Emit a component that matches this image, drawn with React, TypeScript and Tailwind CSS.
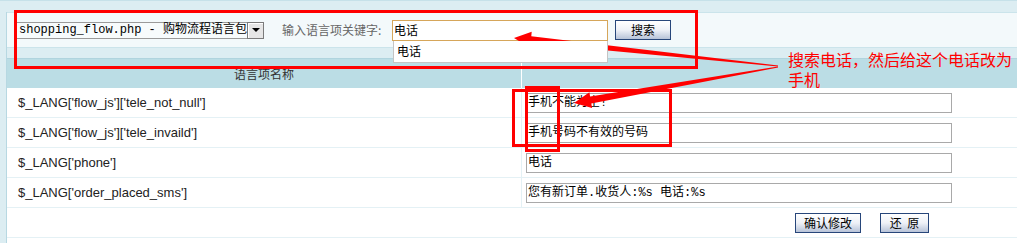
import React from "react";

function arrowPoints(tx: number, ty: number, hx: number, hy: number, hl: number, hw: number, sw0: number, sw1: number) {
  const dx = hx - tx;
  const dy = hy - ty;
  const len = Math.hypot(dx, dy);
  const ux = dx / len;
  const uy = dy / len;
  const nx = -uy;
  const ny = ux;
  const bx = hx - ux * hl;
  const by = hy - uy * hl;
  const p = (x: number, y: number) => `${x.toFixed(1)},${y.toFixed(1)}`;
  return [
    p(tx + nx * sw0, ty + ny * sw0),
    p(bx + nx * sw1, by + ny * sw1),
    p(bx + nx * hw, by + ny * hw),
    p(hx, hy),
    p(bx - nx * hw, by - ny * hw),
    p(bx - nx * sw1, by - ny * sw1),
    p(tx - nx * sw0, ty - ny * sw0),
  ].join(" ");
}

const rows = [
  { key: "$_LANG['flow_js']['tele_not_null']", value: "手机不能为空!" },
  { key: "$_LANG['flow_js']['tele_invaild']", value: "手机号码不有效的号码" },
  { key: "$_LANG['phone']", value: "电话" },
  { key: "$_LANG['order_placed_sms']", value: "您有新订单.收货人:%s 电话:%s" },
];

function Btn({ children, w }: { children: React.ReactNode; w: string }) {
  return (
    <button
      className={`${w} h-[20px] border border-[#27467a] bg-linear-to-b from-white via-[#eef1f7] to-[#b7c3d8] text-[12px] leading-[18px] text-black font-['Noto_Sans_CJK_SC',sans-serif] p-0`}
    >
      {children}
    </button>
  );
}

export default function App() {
  return (
    <div className="relative w-[1017px] h-[243px] overflow-hidden bg-[#dcedf2] text-[12px] font-['Liberation_Sans','Noto_Sans_CJK_SC',sans-serif] text-[#222]">
      <div className="h-[12px] border-t border-[#c6e1e9]" />
      <div className="ml-[6px] border-l border-[#b7d8e2] h-[231px]">
        {/* search panel */}
        <div className="h-[36px] bg-[#f3f9fb] border-t border-[#c6e1e9] border-b border-[#cbe4eb] flex items-center pl-[10px]">
          <div className="flex items-center h-[17px] w-[247px] border-y border-[#9a9a9a] bg-[#f7fbfc]">
            <div className="flex-1 pl-[2px] whitespace-nowrap font-['Liberation_Mono','Noto_Sans_CJK_SC',monospace] text-[12px] leading-[15px] text-black">
              shopping_flow.php - 购物流程语言包
            </div>
            <div className="w-[17px] h-[17px] border border-[#7b7b7b] bg-[#e6e6e6] flex items-center justify-center shadow-[inset_1px_1px_0_#ffffff]">
              <div className="w-0 h-0 border-x-[4px] border-x-transparent border-t-[4px] border-t-black" />
            </div>
          </div>
          <div className="ml-[18px] w-[110px] whitespace-nowrap text-[#666] font-['Noto_Sans_CJK_SC',sans-serif] text-[12px]">
            输入语言项关键字:
          </div>
          <div className="relative">
            <div className="w-[216px] h-[21px] border border-[#d6a65a] bg-white flex items-center pl-[1px] text-[12px] text-black font-['Noto_Sans_CJK_SC',sans-serif]">
              电话
            </div>
            <div className="absolute left-[1px] top-[21px] w-[215px] h-[22px] border border-[#c4c4c4] border-t-0 bg-white flex items-center pl-[3px] text-[12px] text-black font-['Noto_Sans_CJK_SC',sans-serif] z-10">
              电话
            </div>
          </div>
          <div className="ml-[7px]">
            <Btn w="w-[56px]">搜索</Btn>
          </div>
        </div>
        <div className="h-[10px]" />
        {/* table */}
        <div className="bg-white">
          <div className="grid grid-cols-[515px_1fr] h-[30px] bg-[#bbdde5] border-t border-[#b0d4de]">
            <div className="border-r border-white flex items-center justify-center text-[#333] font-['Noto_Sans_CJK_SC',sans-serif]">
              语言项名称
            </div>
            <div />
          </div>
          {rows.map((r) => (
            <div key={r.key} className="grid grid-cols-[515px_1fr] h-[30px] border-b border-[#e4f1f5]">
              <div className="border-r border-[#e4f1f5] flex items-center pl-[11px] text-[13px] text-[#222]">{r.key}</div>
              <div className="flex items-center pl-[4px]">
                <div className="w-[426px] h-[20px] border border-[#a9a9a9] bg-white flex items-center pl-[1px] whitespace-nowrap text-[12px] text-black font-['Liberation_Mono','Noto_Sans_CJK_SC',monospace]">
                  {r.value}
                </div>
              </div>
            </div>
          ))}
          <div className="grid grid-cols-[515px_1fr] h-[30px] border-b border-[#e4f1f5]">
            <div />
            <div className="flex items-center pl-[273px] gap-[19px]">
              <Btn w="w-[66px]">确认修改</Btn>
              <Btn w="w-[49px]">还&nbsp;&nbsp;原</Btn>
            </div>
          </div>
          <div className="h-[10px]" />
        </div>
      </div>

      {/* annotations */}
      <div className="absolute left-[14px] top-[10px] w-[684px] h-[59px] border-[3px] border-[#ff0000] pointer-events-none" />
      <div className="absolute left-[512px] top-[89px] w-[160px] h-[58px] border-[3px] border-[#ff0000] pointer-events-none" />
      <div className="absolute left-[525px] top-[86px] w-[35px] h-[66px] border-[3px] border-[#ff0000] pointer-events-none" />
      <svg className="absolute left-0 top-0 pointer-events-none" width="1017" height="243" viewBox="0 0 1017 243">
        <polygon points={arrowPoints(778, 66, 514, 38, 17, 8, 0.5, 3.5)} fill="#ff0000" />
        <polygon points={arrowPoints(778, 67, 574, 103, 17, 8, 0.5, 3.5)} fill="#ff0000" />
      </svg>
      <div className="absolute left-[788px] top-[50px] w-[229px] text-[16px] leading-[18px] text-[#ff0000] font-['Noto_Sans_CJK_SC',sans-serif]">
        <div className="h-[20px] whitespace-nowrap">搜索电话，然后给这个电话改为</div>
        <div className="h-[18px] whitespace-nowrap">手机</div>
      </div>
    </div>
  );
}
